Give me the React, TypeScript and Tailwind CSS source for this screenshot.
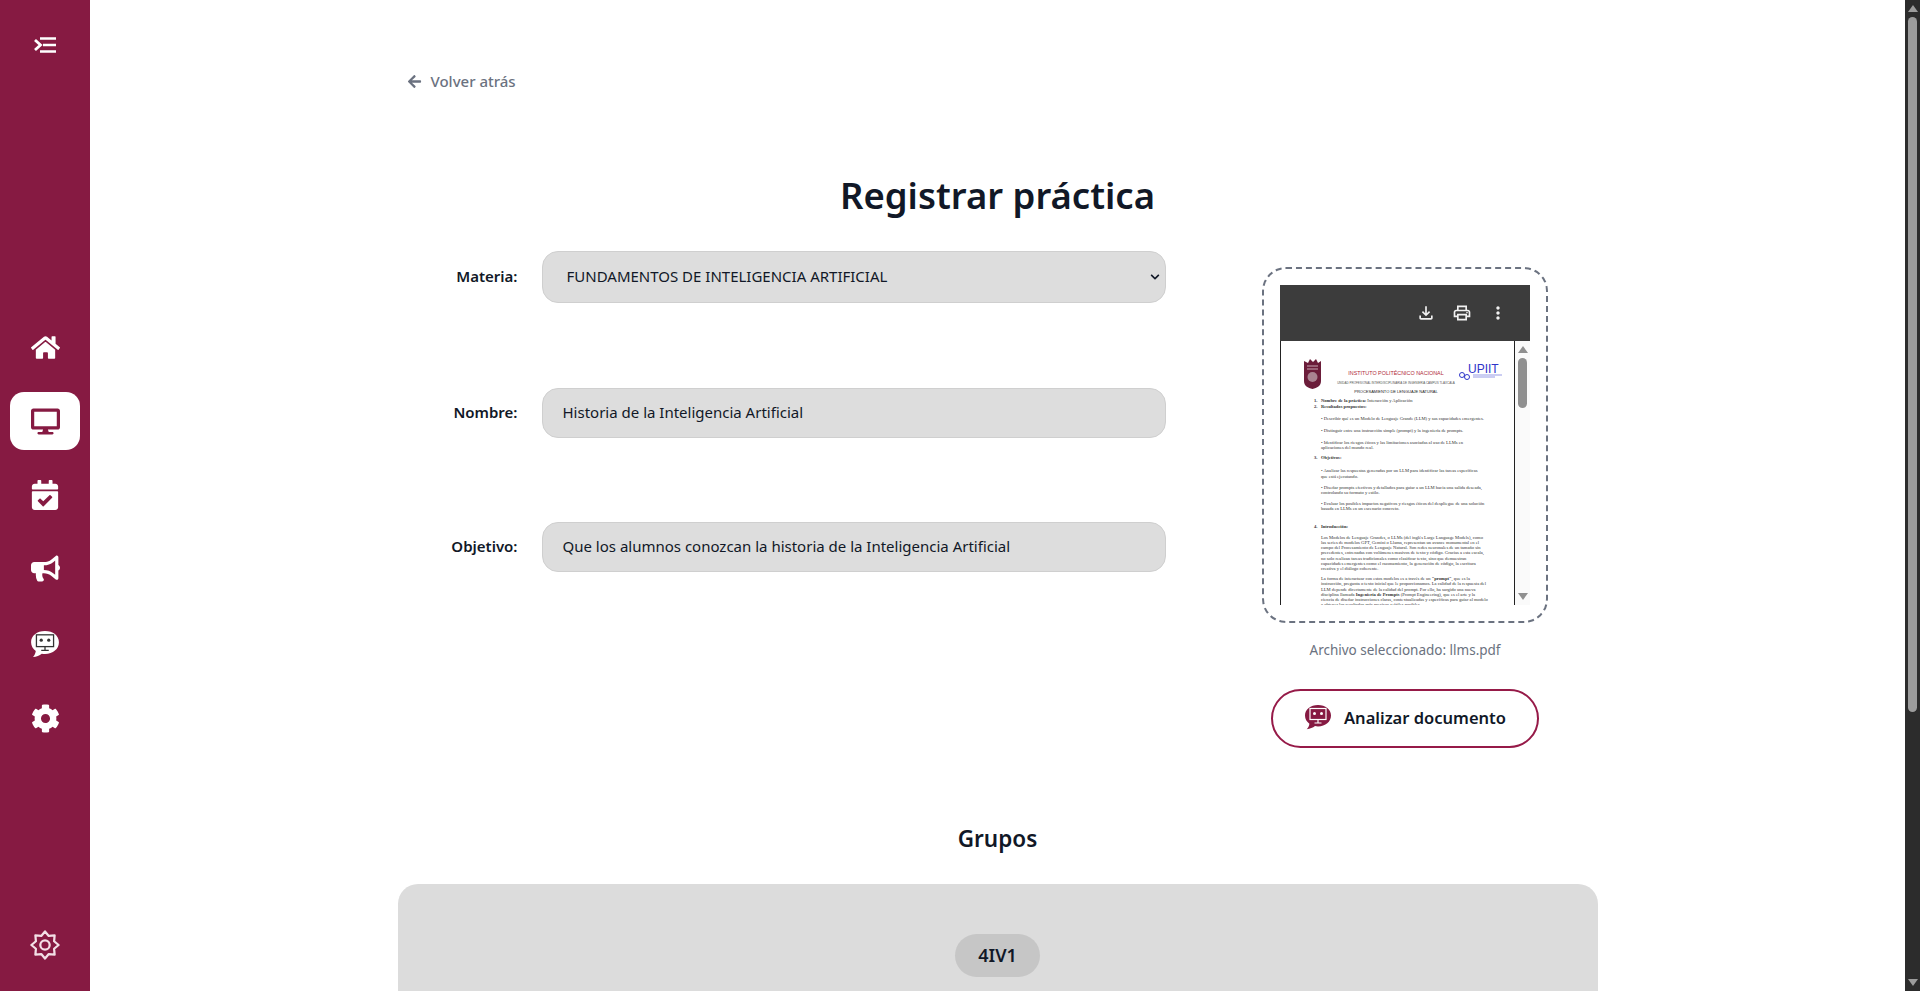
import { FaArrowLeft, FaBullhorn, FaCalendarCheck, FaChevronDown, FaCog, FaDesktop, FaHome } from "react-icons/fa"
import { MdMoreVert, MdOutlineFileDownload, MdOutlinePrint } from "react-icons/md"

function MenuToggle() {
  return (
    <svg width="22" height="16" viewBox="0 0 22 16" fill="none" stroke="white" strokeWidth="2.4">
      <path d="M6 1.500h16M9 8h13M6 14.500h16" />
      <path d="M1 3l5.500 5L1 13" strokeWidth="2.800" />
    </svg>
  )
}

function StarGear() {
  return (
    <svg width="30" height="30" viewBox="0 0 32 32" fill="none" stroke="#f3dfe6" strokeWidth="2.400" strokeLinejoin="round">
      <path d="M16 1.500L20 6.300 26.250 5.750 25.700 12 30.500 16 25.700 20 26.250 26.250 20 25.700 16 30.500 12 25.700 5.750 26.250 6.300 20 1.500 16 6.300 12 5.750 5.750 12 6.300z" />
      <circle cx="16" cy="16" r="5" />
    </svg>
  )
}

function BotBubble({ color, screen, size }: { color: string; screen: string; size: number }) {
  return (
    <svg width={size} height={size} viewBox="0 0 28 28">
      <path d="M14 1C6.500 1 1 5.300 1 11.500c0 3.400 1.700 6.300 4.400 8.200-.2 2-1.200 4-2.600 5.600 3.200-.3 6.100-1.600 8.200-3.200 1 .2 2 .3 3 .3 7.500 0 13-4.600 13-10.900S21.500 1 14 1z" fill={color} />
      <rect x="6" y="4.500" width="16" height="11" fill="none" stroke={screen} strokeWidth="1.200" />
      <circle cx="10.500" cy="9.500" r="1.500" fill={screen} />
      <circle cx="17.500" cy="9.500" r="1.500" fill={screen} />
      <path d="M14 15.500v3M10.500 19h7" stroke={screen} strokeWidth="1.200" />
    </svg>
  )
}

function NavItem({ children, active }: { children: React.ReactNode; active?: boolean }) {
  return (
    <div className={active ? "flex h-[58px] w-[70px] items-center justify-center rounded-[14px] bg-white text-[#861a42]" : "flex h-[58px] w-[70px] items-center justify-center text-white"}>
      {children}
    </div>
  )
}

function Field({ label, value }: { label: string; value: string }) {
  return (
    <div className="flex items-center">
      <label className="w-[120px] pr-6 text-right text-[15px] font-semibold text-[#111827]">{label}</label>
      <div className="flex h-[50px] w-[624px] items-center rounded-2xl border border-[#cfcfcf] bg-[#dddddd] px-5 text-[15px] text-[#111827]">{value}</div>
    </div>
  )
}

function PdfPreview() {
  return (
    <div className="h-[320px] w-[250px] overflow-hidden">
      <div className="flex h-[56px] items-center justify-end gap-[16px] bg-[#3c3c3c] pr-[22px] text-[#f1f1f1]">
        <MdOutlineFileDownload size={20} />
        <MdOutlinePrint size={20} />
        <MdMoreVert size={20} />
      </div>
      <div className="flex h-[264px]">
        <div className="h-full w-[235px] overflow-hidden border-x border-[#222222] bg-white pl-[22px] pr-[26px] pt-[17px] font-['Liberation_Serif',serif] text-[4.600px] leading-[5.200px] text-[#333333]">
          <div className="flex items-start">
            <svg width="19" height="32" viewBox="0 0 19 32" className="shrink-0">
              <path d="M1 3l4 2 2-4 3 3 3-3 2 4 3-2v20c0 5-4 7-8.500 8C5 30 1 28 1 23z" fill="#6b1d3a" />
              <circle cx="9.500" cy="19" r="5" fill="#a98391" />
              <path d="M4 8h11M4 11h11" stroke="#c9a8b4" strokeWidth="1" />
            </svg>
            <div className="ml-[6px] w-[136px] shrink-0 pt-[11px] text-center font-['Liberation_Sans',sans-serif]">
              <div className="whitespace-nowrap text-[5.400px] leading-[8px] text-[#b02a37]">INSTITUTO POLITÉCNICO NACIONAL</div>
              <div className="mt-[4px] whitespace-nowrap text-[3px] leading-[4px] text-[#555555]">UNIDAD PROFESIONAL INTERDISCIPLINARIA DE INGENIERÍA CAMPUS TLAXCALA</div>
              <div className="mt-[4.500px] whitespace-nowrap text-[4px] leading-[5px] text-[#222222]">PROCESAMIENTO DE LENGUAJE NATURAL</div>
            </div>
            <div className="-ml-[5px] mt-[6px] w-[44px] shrink-0 font-['Liberation_Sans',sans-serif] text-[#2f35c9]">
              <div className="pl-[9px] text-[12px] leading-[11px]">UPIIT</div>
              <svg width="44" height="8" viewBox="0 0 44 8" className="-mt-[3px]">
                <circle cx="3" cy="3" r="2.500" fill="none" stroke="#2f35c9" />
                <circle cx="8" cy="5" r="2.500" fill="none" stroke="#2f35c9" />
                <path d="M14 3h29M14 5h22" stroke="#2f35c9" strokeWidth="0.500" />
              </svg>
            </div>
          </div>
          <div className="mt-[4px] pl-[11px]">
            <p><b className="inline-block w-[7px]">1.</b><b>Nombre de la práctica:</b> Interacción y Aplicación</p>
            <p className="mt-[1px]"><b className="inline-block w-[7px]">2.</b><b>Resultados propuestos:</b></p>
            <div className="mt-[7px] space-y-[6.500px] pl-[7px]">
              <p className="whitespace-nowrap">• Describir qué es un Modelo de Lenguaje Grande (LLM) y sus capacidades emergentes.</p>
              <p>• Distinguir entre una instrucción simple (prompt) y la ingeniería de prompts.</p>
              <p>• Identificar los riesgos éticos y las limitaciones asociadas al uso de LLMs en<br />aplicaciones del mundo real.</p>
            </div>
            <p className="mt-[5px]"><b className="inline-block w-[7px]">3.</b><b>Objetivos:</b></p>
            <div className="mt-[8px] space-y-[6px] pl-[7px]">
              <p>• Analizar las respuestas generadas por un LLM para identificar las tareas específicas<br />que está ejecutando.</p>
              <p>• Diseñar prompts efectivos y detallados para guiar a un LLM hacia una salida deseada,<br />controlando su formato y estilo.</p>
              <p>• Evaluar los posibles impactos negativos y riesgos éticos del despliegue de una solución<br />basada en LLMs en un escenario concreto.</p>
            </div>
            <p className="mt-[12px]"><b className="inline-block w-[7px]">4.</b><b>Introducción:</b></p>
            <div className="mt-[6px] space-y-[5px] pl-[7px]">
              <p>Los Modelos de Lenguaje Grandes, o LLMs (del inglés Large Language Models), como las series de modelos GPT, Gemini o Llama, representan un avance monumental en el campo del Procesamiento de Lenguaje Natural. Son redes neuronales de un tamaño sin precedentes, entrenadas con volúmenes masivos de texto y código. Gracias a esta escala, no solo realizan tareas tradicionales como clasificar texto, sino que demuestran capacidades emergentes como el razonamiento, la generación de código, la escritura creativa y el diálogo coherente.</p>
              <p>La forma de interactuar con estos modelos es a través de un <b>"prompt"</b>, que es la instrucción, pregunta o texto inicial que le proporcionamos. La calidad de la respuesta del LLM depende directamente de la calidad del prompt. Por ello, ha surgido una nueva disciplina llamada <b>Ingeniería de Prompts</b> (Prompt Engineering), que es el arte y la ciencia de diseñar instrucciones claras, contextualizadas y específicas para guiar al modelo a obtener los resultados más precisos y útiles posibles.</p>
            </div>
          </div>
        </div>
        <div className="flex w-[15px] flex-col items-center bg-[#fafafa]">
          <div className="mt-[5px] h-0 w-0 border-x-[5px] border-b-[7px] border-x-transparent border-b-[#8f8f8f]" />
          <div className="mt-[5px] h-[50px] w-[9px] rounded-full bg-[#8f8f8f]" />
          <div className="mb-[5px] mt-auto h-0 w-0 border-x-[5px] border-t-[7px] border-x-transparent border-t-[#8f8f8f]" />
        </div>
      </div>
    </div>
  )
}

export default function App() {
  return (
    <div className="flex h-[991px] overflow-hidden bg-white font-['Noto_Sans',sans-serif]">
      {/* Barra lateral */}
      <aside className="flex w-[90px] shrink-0 flex-col items-center bg-[#861a42] pb-[31px] pt-[37px]">
        <MenuToggle />
        <div className="mt-[265px] flex flex-col items-center gap-[16.400px]">
          <NavItem><FaHome size={29} /></NavItem>
          <NavItem active><FaDesktop size={29} /></NavItem>
          <NavItem><FaCalendarCheck size={30} className="-translate-y-px" /></NavItem>
          <NavItem><FaBullhorn size={29} className="-translate-y-[2px]" /></NavItem>
          <NavItem><BotBubble color="white" screen="#333333" size={30} /></NavItem>
          <NavItem><FaCog size={29} /></NavItem>
        </div>
        <div className="mt-auto"><StarGear /></div>
      </aside>

      <main className="min-w-0 flex-1">
        <div className="mx-auto w-[1200px]">
          <a className="ml-[9px] mt-[70px] flex items-center gap-[9px] text-[15px] font-medium text-[#6b7280]">
            <FaArrowLeft size={15} />
            Volver atrás
          </a>
          <h1 className="mt-[77px] text-center text-[36.500px] font-semibold leading-[50px] text-[#111827]">Registrar práctica</h1>

          <div className="mt-[31px] flex">
            <div className="ml-[24px] flex w-[800px] flex-col">
              <div className="flex items-center">
                <label className="w-[120px] pr-6 text-right text-[15px] font-semibold text-[#111827]">Materia:</label>
                <div className="flex h-[52px] w-[624px] items-center justify-between rounded-2xl border border-[#cfcfcf] bg-[#dddddd] pl-6 pr-[5px] text-[15px] text-[#111827]">
                  FUNDAMENTOS DE INTELIGENCIA ARTIFICIAL
                  <FaChevronDown size={10} />
                </div>
              </div>
              <div className="mt-[85px] flex flex-col gap-[84px]">
                <Field label="Nombre:" value="Historia de la Inteligencia Artificial" />
                <Field label="Objetivo:" value="Que los alumnos conozcan la historia de la Inteligencia Artificial" />
              </div>
            </div>

            <div className="ml-[41px] mt-[16px] flex w-[285px] flex-col items-center">
              <div className="rounded-[24px] border-2 border-dashed border-[#6b7280] p-4">
                <PdfPreview />
              </div>
              <p className="mt-[17px] text-[13.500px] text-[#6b7280]">Archivo seleccionado: llms.pdf</p>
              <button className="mt-[29px] flex h-[59px] w-[268px] items-center justify-center gap-[12px] rounded-full border-2 border-[#961a48] bg-white text-[16.500px] font-semibold text-[#111827]">
                <BotBubble color="#861a42" screen="white" size={28} />
                Analizar documento
              </button>
            </div>
          </div>

          <h2 className="mt-[76px] text-center text-[22.500px] font-semibold leading-[30px] text-[#111827]">Grupos</h2>
          <div className="mt-[30px] flex h-[300px] justify-center rounded-[20px] bg-[#dcdcdc] pt-[50px]">
            <span className="flex h-[43px] w-[85px] items-center justify-center rounded-full bg-[#c6c6c6] text-[18px] font-semibold text-[#111827]">4IV1</span>
          </div>
        </div>
      </main>

      {/* Barra de desplazamiento */}
      <div className="flex w-[15px] shrink-0 flex-col items-center bg-[#2c2c2c]">
        <div className="mt-[5px] h-0 w-0 border-x-[5px] border-b-[7px] border-x-transparent border-b-[#9c9c9c]" />
        <div className="mt-[5px] h-[695px] w-[9px] rounded-full bg-[#9c9c9c]" />
        <div className="mb-[5px] mt-auto h-0 w-0 border-x-[5px] border-t-[7px] border-x-transparent border-t-[#9c9c9c]" />
      </div>
    </div>
  )
}
